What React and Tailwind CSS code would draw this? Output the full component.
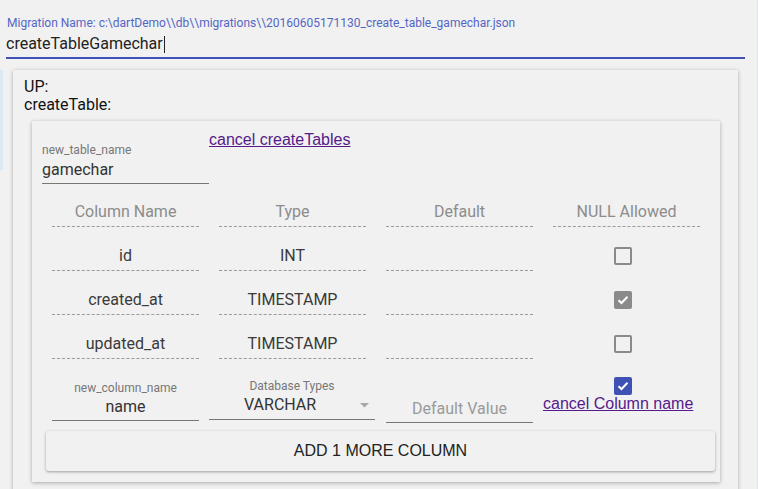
import React from "react";

const Check = ({ color }) => (
  <div className={`w-[18px] h-[18px] rounded-[2px] flex items-center justify-center ${color}`}>
    <svg width="12" height="10" viewBox="0 0 12 10" fill="none">
      <path d="M1.5 5.2 L4.5 8 L10.5 1.8" stroke="white" strokeWidth="2" />
    </svg>
  </div>
);

const Empty = () => (
  <div className="w-[18px] h-[18px] rounded-[2px] border-2 border-[#8a8a8a]" />
);

const Cell = ({ children, head }) => (
  <div
    className={`h-[25px] pb-[4px] border-b border-dashed border-[#9a9a9a] text-center leading-[20px] text-[16px] ${
      head ? "text-[#8c8c8c]" : "text-[#3a3a3a]"
    }`}
  >
    {children}
  </div>
);

export default function App() {
  const rows = [
    ["id", "INT", "empty"],
    ["created_at", "TIMESTAMP", "gray"],
    ["updated_at", "TIMESTAMP", "empty"],
  ];
  return (
    <div
      className="relative w-[758px] h-[489px] overflow-hidden bg-[#f1f1f1] border-r border-[#dfe4ea]"
      style={{ fontFamily: "Roboto, 'Liberation Sans', sans-serif" }}
    >
      <div className="absolute left-0 top-[70px] w-[3px] h-[100px] bg-[#dbe9f4]" />

      {/* migration name field */}
      <div className="pl-[6px] pt-[16px] mr-[12px]">
        <div className="text-[12px] leading-[14px] text-[#5466c4] pl-[1px]">
          Migration Name: c:\dartDemo\\db\\migrations\\20160605171130_create_table_gamechar.json
        </div>
        <div className="mt-[4px] pb-[3px] border-b-2 border-[#3f51b5] text-[16px] leading-[20px] text-[#222] flex items-center">
          <span>createTableGamechar</span>
          <span className="inline-block w-[1px] h-[17px] bg-[#222] ml-[1px]" />
        </div>
      </div>

      {/* outer card */}
      <div className="ml-[13px] mt-[11px] w-[725px] h-[460px] px-[11px] pt-[8px] bg-[#f1f1f1] shadow-[0_1px_4px_rgba(0,0,0,0.3)]">
        <div className="text-[16px] leading-[18px] text-[#111]">UP:</div>
        <div className="text-[16px] leading-[18px] text-[#111]">createTable:</div>

        {/* inner card */}
        <div className="ml-[8px] mt-[7px] w-[688px] pl-[10px] pb-[11px] bg-[#f1f1f1] shadow-[0_1px_4px_rgba(0,0,0,0.3)]">
          <div className="flex items-start">
            <div className="w-[167px] pt-[22px]">
              <div className="text-[12px] leading-[14px] text-[#777]">new_table_name</div>
              <div className="mt-[3px] pb-[3px] border-b border-[#777] text-[16px] leading-[20px] text-[#333]">
                gamechar
              </div>
            </div>
            <a
              href="#"
              className="mt-[10px] text-[16px] leading-[18px] text-[#551a8b] underline"
              style={{ fontFamily: "'Liberation Sans', Arial, sans-serif" }}
            >
              cancel createTables
            </a>
          </div>

          {/* table */}
          <div className="ml-[10px] w-[648px] grid grid-cols-4 gap-x-[20px] mt-[18px]">
            <Cell head>Column Name</Cell>
            <Cell head>Type</Cell>
            <Cell head>Default</Cell>
            <Cell head>NULL Allowed</Cell>
            {rows.map(([n, t, c]) => (
              <React.Fragment key={n}>
                <div className="mt-[19px]"><Cell>{n}</Cell></div>
                <div className="mt-[19px]"><Cell>{t}</Cell></div>
                <div className="mt-[19px]"><Cell>{""}</Cell></div>
                <div className="mt-[19px] h-[25px] flex justify-center pr-[7px] pt-[1px]">
                  {c === "gray" ? <Check color="bg-[#8a8a8a]" /> : <Empty />}
                </div>
              </React.Fragment>
            ))}

            {/* new column row */}
            <div className="mt-[22px] text-center">
              <div className="text-[12px] leading-[14px] text-[#777]">new_column_name</div>
              <div className="mt-[2px] pb-[3px] border-b border-[#777] text-[16px] leading-[20px] text-[#333]">
                name
              </div>
            </div>
            <div className="mt-[20px] w-[166px] -ml-[10px]">
              <div className="text-[12px] leading-[14px] text-[#777] text-center">Database Types</div>
              <div className="mt-[2px] pb-[4px] border-b border-[#777] text-[16px] leading-[20px] text-[#333] flex items-center">
                <span className="flex-1 pl-[35px]">VARCHAR</span>
                <svg width="9" height="5" viewBox="0 0 9 5" className="mr-[6px]">
                  <path d="M0 0 L9 0 L4.5 4.5 Z" fill="#a8a8a8" />
                </svg>
              </div>
            </div>
            <div className="mt-[40px] text-center">
              <div className="pb-[3px] border-b border-[#777] text-[16px] leading-[20px] text-[#9a9a9a]">
                Default Value
              </div>
            </div>
            <div className="mt-[18px] -ml-[10px] flex flex-col items-start">
              <div className="ml-[71px]">
                <Check color="bg-[#3f51b5]" />
              </div>
              <a
                href="#"
                className="text-[16px] leading-[18px] text-[#551a8b] underline whitespace-nowrap"
                style={{ fontFamily: "'Liberation Sans', Arial, sans-serif" }}
              >
                cancel Column name
              </a>
            </div>
          </div>

          <button
            className="mt-[8px] ml-[4px] w-[669px] h-[40px] rounded-[3px] bg-[#f1f1f1] shadow-[0_1px_3px_rgba(0,0,0,0.35)] text-[16px] text-[#222] flex items-center justify-center"
            style={{ fontFamily: "'Liberation Sans', Arial, sans-serif" }}
          >
            ADD 1 MORE COLUMN
          </button>
        </div>
      </div>
    </div>
  );
}
